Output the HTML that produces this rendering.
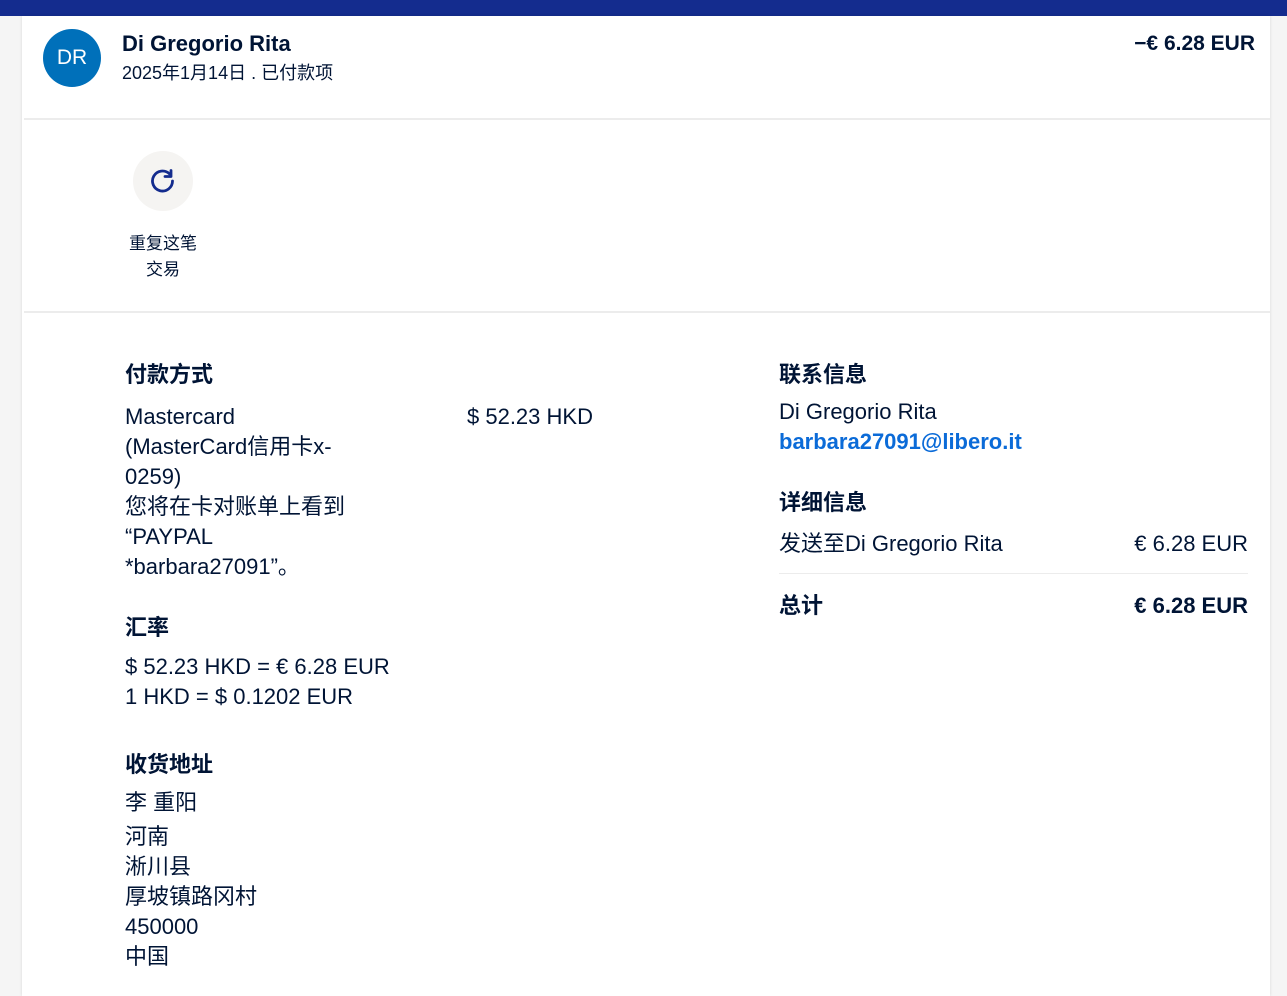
<!DOCTYPE html>
<html><head><meta charset="utf-8">
<style>
*{margin:0;padding:0;box-sizing:border-box}
body{width:1287px;height:986px;overflow:hidden;background:#f5f5f5;font-family:"Liberation Sans","Noto Sans CJK SC",sans-serif;color:#001435;position:relative}
.a{position:absolute;white-space:nowrap}
.bar{position:absolute;left:0;top:0;width:1287px;height:16px;background:#142c8e}
.card{position:absolute;left:22px;top:16px;width:1248px;height:980px;background:#fff;box-shadow:0 0 3px rgba(0,0,0,.12)}
.hr{position:absolute;height:2px;background:#ececec}
.t{font-size:22px;line-height:30px}
.h{font-size:22px;font-weight:bold;line-height:30px}
</style></head><body>
<div class="bar"></div>
<div class="card"></div>
<div class="a" style="left:43px;top:29px;width:58px;height:58px;border-radius:50%;background:#0070ba;color:#fff;font-size:21px;line-height:58px;text-align:center">DR</div>
<div class="a" style="left:122px;top:31px;font-size:22px;font-weight:bold">Di Gregorio Rita</div>
<div class="a" style="left:122px;top:59px;font-size:18px">2025年1月14日 . 已付款项</div>
<div class="a" style="right:32px;top:32px;font-size:21px;font-weight:bold">−€ 6.28 EUR</div>
<div class="hr" style="left:24px;top:118px;width:1246px"></div>
<div class="a" style="left:133px;top:151px;width:60px;height:60px;border-radius:50%;background:#f5f4f2"></div>
<svg class="a" style="left:150px;top:168px" width="26" height="26" viewBox="0 0 26 26"><path d="M22.5 13a10 10 0 1 1-3-7.1" fill="none" stroke="#142c8e" stroke-width="2.8" stroke-linecap="round"/><path d="M21 2.5v6h-6" fill="none" stroke="#142c8e" stroke-width="2.8" stroke-linecap="round" stroke-linejoin="round"/></svg>
<div class="a" style="left:118px;top:231px;width:90px;text-align:center;font-size:17px;line-height:26px;white-space:normal">重复这笔<br>交易</div>
<div class="hr" style="left:24px;top:311px;width:1246px"></div>
<div class="a h" style="left:125px;top:360px">付款方式</div>
<div class="a t" style="left:125px;top:402px">Mastercard<br>(MasterCard信用卡x-<br>0259)<br>您将在卡对账单上看到<br>“PAYPAL<br>*barbara27091”。</div>
<div class="a t" style="left:467px;top:402px">$ 52.23 HKD</div>
<div class="a h" style="left:125px;top:613px">汇率</div>
<div class="a t" style="left:125px;top:652px">$ 52.23 HKD = € 6.28 EUR<br>1 HKD = $ 0.1202 EUR</div>
<div class="a h" style="left:125px;top:750px">收货地址</div>
<div class="a t" style="left:125px;top:788px">李 重阳</div>
<div class="a t" style="left:125px;top:822px">河南<br>淅川县<br>厚坡镇路冈村<br>450000<br>中国</div>
<div class="a h" style="left:779px;top:360px">联系信息</div>
<div class="a t" style="left:779px;top:397px">Di Gregorio Rita</div>
<div class="a t" style="left:779px;top:427px;color:#0b6bd8;font-weight:bold">barbara27091@libero.it</div>
<div class="a h" style="left:779px;top:488px">详细信息</div>
<div class="a t" style="left:779px;top:529px">发送至Di Gregorio Rita</div>
<div class="a t" style="right:39px;top:529px">€ 6.28 EUR</div>
<div class="hr" style="left:779px;top:573px;width:469px;height:1px"></div>
<div class="a h" style="left:779px;top:591px">总计</div>
<div class="a h" style="right:39px;top:591px">€ 6.28 EUR</div>
</body></html>
